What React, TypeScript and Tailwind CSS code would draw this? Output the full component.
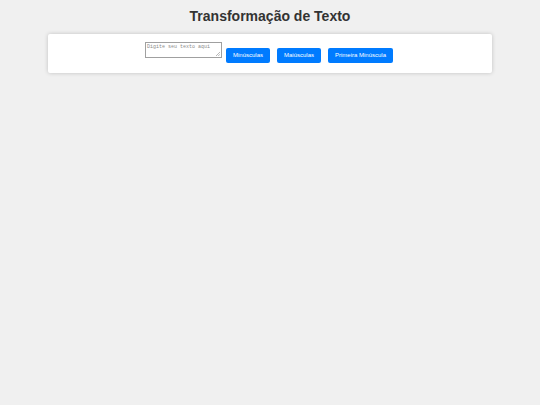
import React, { useState } from 'react';

interface ActionProps {
  label: string;
  onClick: () => void;
}

const ActionButton: React.FC<ActionProps> = ({ label, onClick }) => (
  <button
    type="button"
    onClick={onClick}
    className="bg-[#007bff] text-white text-[6px] leading-[7px] px-[7px] py-1 rounded-[2px] cursor-pointer hover:bg-[#0056b3]"
  >
    {label}
  </button>
);

const App: React.FC = () => {
  const [text, setText] = useState('');

  const firstLower = () => setText(text.charAt(0).toLowerCase() + text.slice(1));

  return (
    <div className="min-h-screen bg-[#f0f0f0] font-['Liberation_Sans',Arial,sans-serif] text-center pt-2">
      <h1 className="text-[14px] leading-4 font-bold text-[#333] mb-[10px]">Transformação de Texto</h1>

      {/* Card */}
      <div className="mx-12 bg-white rounded-[2px] shadow-[0_0_4px_rgba(0,0,0,0.2)] pl-2 pr-[10px] pt-2 pb-[10px] flex items-end justify-center">
        <div className="relative mb-[5px] mr-1">
          <textarea
            aria-label="Texto"
            placeholder="Digite seu texto aqui"
            value={text}
            onChange={(e) => setText(e.target.value)}
            className="block w-[77px] h-4 px-px pt-px bg-white border border-[#a0a0a0] font-['Liberation_Mono',monospace] text-[5px] leading-[7px] text-black placeholder:text-[#8a8a8a] resize-none overflow-hidden"
          />
          {/* Resize grip */}
          <svg className="absolute right-0.5 bottom-0.5 w-1 h-1 pointer-events-none" viewBox="0 0 4 4" stroke="#888" strokeWidth="0.6" aria-hidden="true">
            <path d="M0 4 4 0M2.2 4 4 2.2" />
          </svg>
        </div>
        <div className="flex gap-[7px]">
          <ActionButton label="Minúsculas" onClick={() => setText(text.toLowerCase())} />
          <ActionButton label="Maiúsculas" onClick={() => setText(text.toUpperCase())} />
          <ActionButton label="Primeira Minúscula" onClick={firstLower} />
        </div>
      </div>
    </div>
  );
};

export default App;
